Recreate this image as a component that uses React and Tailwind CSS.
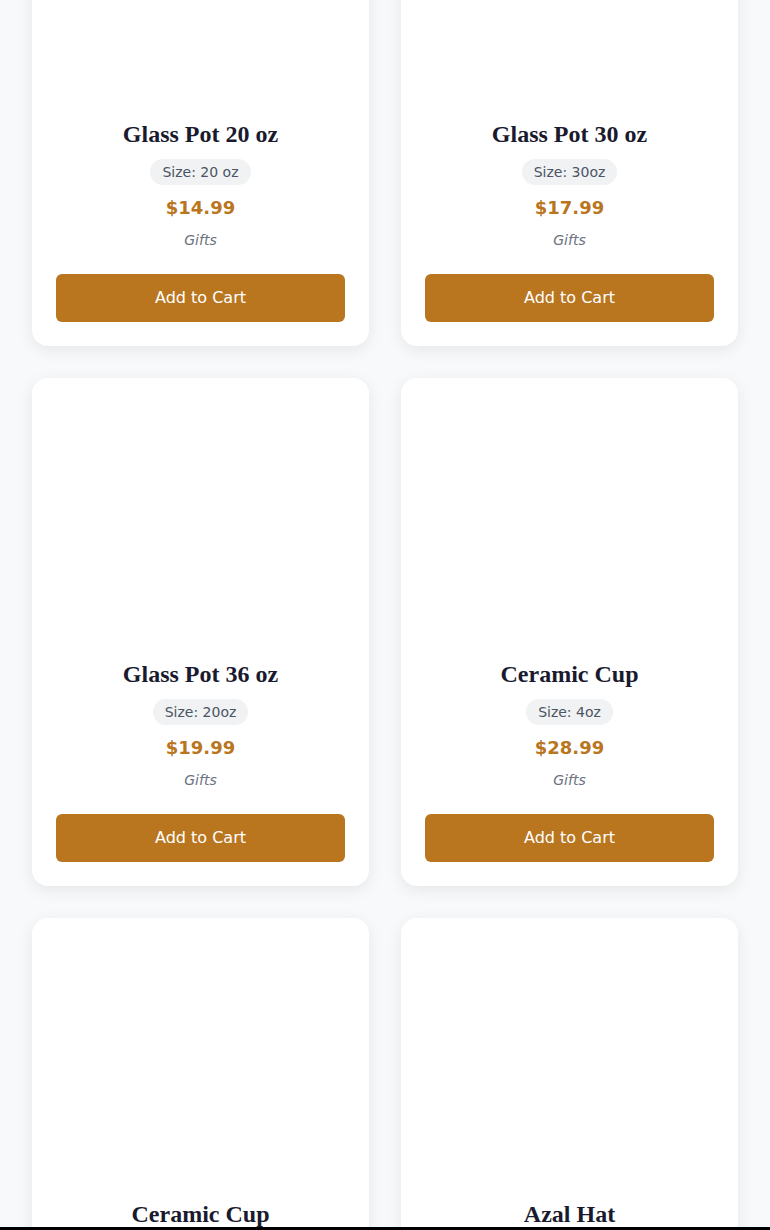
// Product grid (scrolled view)
const products = [
  { name: 'Glass Pot 20 oz', size: '20 oz', price: '$14.99', category: 'Gifts' },
  { name: 'Glass Pot 30 oz', size: '30oz', price: '$17.99', category: 'Gifts' },
  { name: 'Glass Pot 36 oz', size: '20oz', price: '$19.99', category: 'Gifts' },
  { name: 'Ceramic Cup', size: '4oz', price: '$28.99', category: 'Gifts' },
  { name: 'Ceramic Cup', size: '8oz', price: '$32.99', category: 'Gifts' },
  { name: 'Azal Hat', size: 'One size', price: '$24.99', category: 'Gifts' },
];

function ProductCard({ product }) {
  return (
    <div className="flex flex-col rounded-2xl bg-white shadow-[0_4px_16px_rgba(0,0,0,0.08)]">
      {/* Image placeholder */}
      <div className="h-64 rounded-t-2xl bg-white" />

      <div className="flex flex-col items-center px-6 pt-6 pb-6">
        <h3 className="text-2xl leading-8 font-bold text-[#1a1a2e] font-['Liberation_Serif',serif]">
          {product.name}
        </h3>
        <span className="mt-[9px] rounded-full bg-[#f1f2f4] px-3 py-1 text-sm leading-[18px] text-[#4b5563]">
          Size: {product.size}
        </span>
        <p className="mt-[9px] text-lg leading-7 font-bold text-[#b9761f]">{product.price}</p>
        <p className="mt-2 text-sm leading-5 italic text-[#6b7280]">{product.category}</p>
        <button
          type="button"
          className="mt-6 h-12 w-full rounded-md bg-[#b9761f] text-base text-white"
        >
          Add to Cart
        </button>
      </div>
    </div>
  );
}

export default function App() {
  return (
    <div className="h-screen overflow-hidden bg-[#f8f9fb] font-['DejaVu_Sans',sans-serif]">
      <div className="-mt-[162px] grid grid-cols-2 gap-8 px-8">
        {products.map((p, i) => (
          <ProductCard key={i} product={p} />
        ))}
      </div>
      <div className="fixed inset-x-0 bottom-0 h-[3px] bg-black" />
    </div>
  );
}
